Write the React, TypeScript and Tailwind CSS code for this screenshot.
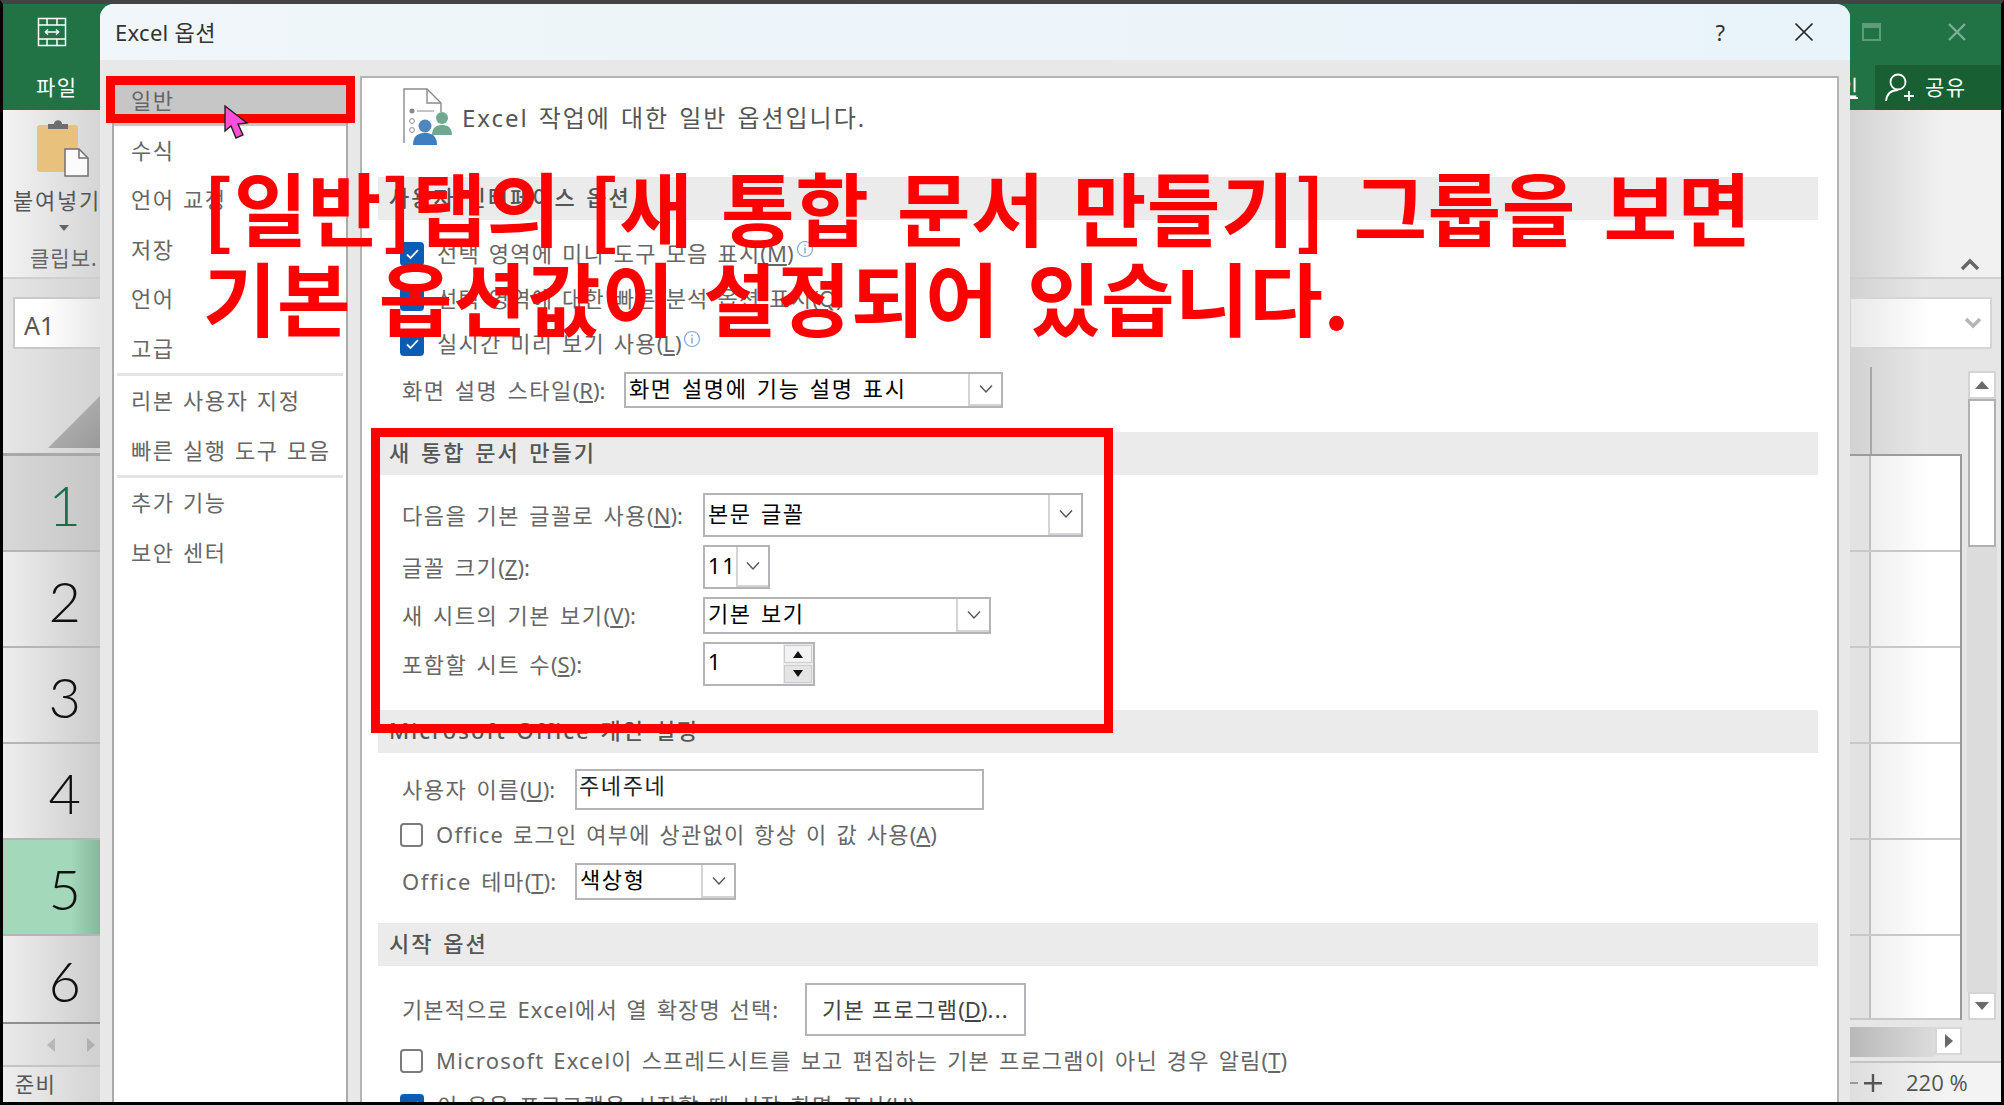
import React from "react";

const Chev = ({ className = "" }: { className?: string }) => (
  <svg width="16" height="10" viewBox="0 0 16 10" className={className} fill="none" stroke="#555" strokeWidth="1.4"><path d="M2 1.5 L8 8 L14 1.5" /></svg>
);

const U = ({ c }: { c: string }) => (<span className="tracking-normal">(<u>{c}</u>)</span>);

const Info = () => (
  <svg width="18" height="18" viewBox="0 0 18 18" className="ml-[2px] -mt-[10px]" fill="none"><circle cx="9" cy="9" r="7.5" stroke="#7ea6d8" strokeWidth="1.2" /><rect x="8.3" y="7.5" width="1.4" height="6" fill="#7ea6d8" /><rect x="8.3" y="4.5" width="1.4" height="1.6" fill="#7ea6d8" /></svg>
);

const Check = ({ on }: { on?: boolean }) => on ? (
  <span className="flex h-[24px] w-[24px] items-center justify-center rounded-[4px] bg-[#0b5cb5] shrink-0">
    <svg width="15" height="12" viewBox="0 0 15 12" fill="none" stroke="#fff" strokeWidth="1.8"><path d="M2 6.5 L5.5 10 L13 2" /></svg>
  </span>
) : (
  <span className="block h-[24px] w-[23px] rounded-[4px] border-2 border-[#7b7b7b] bg-white shrink-0" />
);

const Section = ({ title, mt }: { title: string; mt: string }) => (
  <div className={`ml-[16px] mr-[19px] flex h-[43px] items-center bg-[#ebebeb] pb-[2px] pl-[11px] text-[22px] font-medium tracking-[2px] [word-spacing:2px] text-[#555] ${mt}`}>{title}</div>
);

const Select = ({ w, h, text }: { w: string; h: string; text: string }) => (
  <div className={`flex shrink-0 items-stretch border-2 border-[#b4b4b8] bg-white ${w} ${h}`}>
    <span className="flex flex-1 items-center pl-[3px] pb-[4px] text-[22px] tracking-[1.6px] [word-spacing:2px] text-black whitespace-nowrap">{text}</span>
    <span className="flex w-[33px] items-center justify-center border-l-2 border-b-2 border-[#d4d4d4]"><Chev /></span>
  </div>
);

const CheckRow = ({ on, children, cls }: { on?: boolean; children: React.ReactNode; cls: string }) => (
  <div className={`ml-[38px] flex items-center gap-[13px] text-[22px] tracking-[1.2px] [word-spacing:2px] text-[#666] whitespace-nowrap ${cls}`}>
    <Check on={on} />
    <span className="flex items-center">{children}</span>
  </div>
);

const Label = ({ w, children }: { w: string; children: React.ReactNode }) => (
  <span className={`shrink-0 whitespace-nowrap text-[22px] tracking-[1.5px] [word-spacing:2px] text-[#666] ${w}`}>{children}</span>
);

const Nav = ({ children, sel }: { children: React.ReactNode; sel?: boolean }) => (
  <div className={`flex h-[49.5px] items-center pl-[17px] text-[22px] tracking-[1.6px] [word-spacing:1px] text-[#666] whitespace-nowrap ${sel ? "bg-[#c6c6c6]" : ""}`}>{children}</div>
);

const RowNum = ({ n, cls }: { n: number; cls: string }) => (
  <div className={`flex h-[96px] items-center justify-end border-b-2 border-[#b5b5b5] pr-[19px] pt-[4px] font-['Lato',sans-serif] text-[56px] font-light ${cls}`}>{n}</div>
);

const GridRow = ({ h = "h-[96px]" }: { h?: string }) => (
  <div className={`flex border-b-2 border-[#c8c8c8] ${h}`}>
    <div className="h-full w-[21px] border-r-2 border-[#c0c0c0] bg-[#e2e2e2]" />
    <div className="h-full flex-1 bg-[linear-gradient(90deg,#efefef,#ffffff_60px)]" />
  </div>
);

const Arrow = ({ d, fill = "#6a6a6a" }: { d: string; fill?: string }) => (
  <svg width="16" height="14" viewBox="0 0 16 14"><path d={d} fill={fill} /></svg>
);

const GREY = "bg-[linear-gradient(90deg,#f3f3f3_0,#d4d4d4_100px,#d4d4d4_1850px,#f1f1f1_1940px)]";

export default function App() {
  return (
    <div className="relative h-[1105px] w-[2004px] overflow-hidden border-x-[3px] border-t-[4px] border-b-[3px] border-x-black border-t-[#444] border-b-black bg-black font-['Noto_Sans','Noto_Sans_CJK_KR',sans-serif]">
      {/* Excel behind */}
      <div className="flex h-full flex-col">
        {/* green */}
        <div className="flex h-[106px] shrink-0 justify-between bg-[#217346]">
          <div className="flex w-[97px] flex-col text-white">
            <svg width="30" height="30" viewBox="0 0 30 30" className="ml-[34px] mt-[13px]" fill="none" stroke="#fff" strokeWidth="1.5">
              <rect x="1.5" y="1.5" width="27" height="27" />
              <path d="M1.5 8H28.5M1.5 22H28.5M10 1.5V8M20 1.5V8M10 22V28.5M20 22V28.5" />
              <path d="M8 15H22M8 15l3-2.5M8 15l3 2.5M22 15l-3-2.5M22 15l-3 2.5" strokeWidth="1.6" />
            </svg>
            <span className="ml-[33px] mt-[25px] text-[21px] tracking-[1.5px]">파일</span>
          </div>
          <div className="flex w-[151px] flex-col">
            <div className="flex h-[61px] items-start">
              <svg width="20" height="20" viewBox="0 0 20 20" className="ml-[12px] mt-[18px]" fill="none" stroke="#5f9c7b" strokeWidth="2"><rect x="1" y="2" width="17" height="16" /><path d="M1 4.5H18" strokeWidth="3" /></svg>
              <svg width="20" height="20" viewBox="0 0 20 20" className="ml-[65px] mt-[18px]" fill="none" stroke="#7fae95" strokeWidth="2.4"><path d="M2 2 L18 18 M18 2 L2 18" /></svg>
            </div>
            <div className="flex flex-1 items-stretch">
              <span className="flex w-[25px] items-center justify-end pr-[17px] text-[21px] text-white underline">인</span>
              <div className="flex flex-1 items-center bg-[#185f33] pl-[9px] text-white">
                <svg width="32" height="32" viewBox="0 0 32 32" fill="none" stroke="#fff" strokeWidth="1.8"><circle cx="14" cy="10" r="7.5" /><path d="M2 29c1-8 6-11 12-11M20 24h10M25 19v10" /></svg>
                <span className="ml-[9px] text-[21px] tracking-[1.5px]">공유</span>
              </div>
            </div>
          </div>
        </div>
        {/* ribbon */}
        <div className={`relative flex h-[169px] shrink-0 justify-between border-b-2 border-[#cfcfcf] ${GREY}`}>
          <div className="flex w-[97px] flex-col overflow-hidden">
            <svg width="56" height="58" viewBox="0 0 56 58" className="ml-[31px] mt-[9px]">
              <rect x="3" y="6" width="41" height="47" rx="3" fill="#e8c27c" />
              <path d="M14 10V5h6c0-5 8-5 8 0h6v5z" fill="#6e6e6e" />
              <path d="M31 30h14l9 9v18H31z" fill="#fbfbfb" stroke="#707070" strokeWidth="1.5" />
              <path d="M45 30v9h9" fill="none" stroke="#707070" strokeWidth="1.5" />
            </svg>
            <span className="ml-[10px] mt-[7px] text-[22px] tracking-[1.8px] text-[#555] whitespace-nowrap">붙여넣기</span>
            <svg width="12" height="7" viewBox="0 0 12 7" className="ml-[55px] mt-[8px]"><path d="M1 0H11L6 6z" fill="#666" /></svg>
            <span className="ml-[27px] mt-[11px] text-[21px] tracking-[1px] text-[#666] whitespace-nowrap">클립보.</span>
          </div>
          <svg width="20" height="14" viewBox="0 0 20 14" className="mt-[148px] mr-[21px]" fill="none" stroke="#666" strokeWidth="3.4"><path d="M2 11 L10 3 L18 11" /></svg>
        </div>
        {/* formula */}
        <div className="flex h-[70px] shrink-0 justify-between bg-[linear-gradient(90deg,#e6e6e6_0,#d2d2d2_100px,#d2d2d2_1850px,#e6e6e6_1920px)] pt-[18px]">
          <div className="flex h-[52px] w-[87px] ml-[10px] items-center border-2 border-r-0 border-[#c9c9c9] bg-[linear-gradient(90deg,#fff_30%,#e8e8e8)] pl-[9px] pt-[6px] text-[25px] text-[#555]">A1</div>
          <div className="flex h-[52px] w-[141px] mr-[9px] items-center justify-end border-2 border-l-0 border-[#d5d5d5] bg-[linear-gradient(90deg,#e8e8e8,#ffffff_80px)] pr-[8px]">
            <svg width="18" height="12" viewBox="0 0 18 12" fill="none" stroke="#b5b5b5" strokeWidth="3.4"><path d="M2 2 L9 9 L16 2" /></svg>
          </div>
        </div>
        {/* grid */}
        <div className="flex min-h-0 flex-1 justify-between bg-[linear-gradient(90deg,#e6e6e6_0,#d2d2d2_100px,#d2d2d2_1850px,#e6e6e6_1920px)]">
          <div className="flex w-[97px] flex-col">
            <div className="flex h-[107px] items-end border-b-[3px] border-[#a8a8a8] pb-[5px]">
              <div className="ml-[45px] h-[52px] w-[52px] bg-[linear-gradient(135deg,#bbb,#999)] [clip-path:polygon(100%_0,100%_100%,0_100%)]" />
            </div>
            <RowNum n={1} cls="bg-[linear-gradient(90deg,#d8d8d8,#c6c6c6)] text-[#13704a]" />
            <RowNum n={2} cls="bg-[linear-gradient(90deg,#eeeeee,#cccccc)] text-[#111]" />
            <RowNum n={3} cls="bg-[linear-gradient(90deg,#eeeeee,#cccccc)] text-[#111]" />
            <RowNum n={4} cls="bg-[linear-gradient(90deg,#eeeeee,#cccccc)] text-[#111]" />
            <RowNum n={5} cls="bg-[linear-gradient(90deg,#a3d8ba_70%,#86b79c)] text-[#111]" />
            <div className="flex h-[88px] items-center justify-end border-b-2 border-[#8f8f8f] bg-[linear-gradient(90deg,#eeeeee,#cccccc)] pr-[19px] pt-[4px] font-['Lato',sans-serif] text-[56px] font-light text-[#111]">6</div>
            <div className="flex h-[43px] items-center justify-end gap-[24px] border-b-2 border-[#c4c4c4] bg-[linear-gradient(90deg,#e9e9e9,#d0d0d0)] pr-[1px]">
              <Arrow d="M12 0V14L4 7z" fill="#b8b8b8" />
              <Arrow d="M4 0V14L12 7z" fill="#b0b0b0" />
            </div>
            <div className="flex min-h-0 flex-1 items-center bg-[linear-gradient(90deg,#eeeeee,#d4d4d4)] pl-[12px] text-[21px] tracking-[1.2px] text-[#555]">준비</div>
          </div>
          <div className="flex w-[151px] flex-col">
            <div className="flex h-[671px] shrink-0">
              <div className="flex w-[112px] flex-col">
                <div className="flex h-[107px] shrink-0 border-b-2 border-[#9c9c9c] pt-[18px]">
                  <div className="ml-[20px] h-full w-[2px] bg-[#a8a8a8]" />
                </div>
                <div className="flex-1 border-r-2 border-b-2 border-[#999]">
                  <GridRow /><GridRow /><GridRow /><GridRow /><GridRow />
                  <GridRow h="h-[84px]" />
                </div>
              </div>
              <div className="flex w-[39px] flex-col pl-[6px] pr-[5px]">
                <div className="mt-[22px] flex h-[28px] shrink-0 items-center justify-center border-2 border-[#d4d4d4] bg-white"><Arrow d="M1 11H15L8 3z" /></div>
                <div className="h-[148px] shrink-0 border-2 border-[#b0b0b0] bg-white" />
                <div className="-mx-[1px] flex-1 bg-[#dcdcdc]" />
                <div className="flex h-[28px] shrink-0 items-center justify-center border-2 border-[#d4d4d4] bg-white"><Arrow d="M1 3H15L8 11z" /></div>
              </div>
            </div>
            <div className="flex h-[43px] shrink-0 border-b-2 border-[#c4c4c4] bg-[#e6e6e6] pr-[39px] pt-[7px]">
              <div className="h-[30px] flex-1 bg-[linear-gradient(90deg,#b8b8b8,#dcdcdc)]" />
              <div className="flex h-[28px] w-[27px] items-center justify-center border-2 border-[#d8d8d8] bg-white"><Arrow d="M4 0V14L12 7z" /></div>
            </div>
            <div className="flex min-h-0 flex-1 items-center bg-[linear-gradient(90deg,#dedede,#f3f3f3_90px)] text-[#555]">
              <span className="h-[2px] w-[8px] bg-[#999]" />
              <svg width="18" height="18" viewBox="0 0 18 18" className="ml-[6px]"><path d="M0 8h18v2.4H0zM7.8 0h2.4v18H7.8z" fill="#555" /></svg>
              <span className="ml-[24px] font-['Open_Sans',sans-serif] text-[22px]">220 %</span>
            </div>
          </div>
        </div>
      </div>

      {/* dialog */}
      <div className="absolute left-[97px] top-0 flex h-[1099px] w-[1750px] flex-col overflow-hidden rounded-t-[14px] bg-[#e8e8e8]">
        <div className="flex h-[56px] shrink-0 items-center justify-between bg-[linear-gradient(90deg,#f0f6f9,#e9f3fa)] pl-[15px] text-[#333]">
          <span className="text-[22px] tracking-[0.3px]">Excel 옵션</span>
          <div className="flex items-center">
            <span className="text-[22px] text-[#333]">?</span>
            <svg width="20" height="20" viewBox="0 0 20 20" className="ml-[69px] mr-[36px]" fill="none" stroke="#222" strokeWidth="1.7"><path d="M1.5 1.5 L18.5 18.5 M18.5 1.5 L1.5 18.5" /></svg>
          </div>
        </div>
        <div className="flex min-h-0 flex-1 pt-[16px]">
          {/* nav */}
          <div className="ml-[12px] w-[236px] shrink-0 border-x-2 border-[#aaa] bg-white">
            <div className="h-[48px]"><Nav sel>일반</Nav></div>
            <div className="h-[1.5px]" />
            <Nav>수식</Nav>
            <Nav>언어 교정</Nav>
            <Nav>저장</Nav>
            <Nav>언어</Nav>
            <Nav>고급</Nav>
            <div className="mx-[3px] h-[3px] bg-[#e2e4ea]" />
            <Nav>리본 사용자 지정</Nav>
            <Nav>빠른 실행 도구 모음</Nav>
            <div className="mx-[3px] h-[3px] bg-[#e2e4ea]" />
            <Nav>추가 기능</Nav>
            <Nav>보안 센터</Nav>
          </div>
          {/* right */}
          <div className="ml-[12px] mr-[11px] min-w-0 flex-1 border-x-2 border-t-2 border-[#b4b4b4] bg-white pt-[10px]">
            <div className="ml-[41px] flex h-[57px] items-center">
              <svg width="50" height="57" viewBox="0 0 50 57" fill="none">
                <path d="M1 55V1H24L38 15V24" stroke="#8a8a8a" strokeWidth="1.4" />
                <path d="M24 1V15H38" stroke="#8a8a8a" strokeWidth="1.4" />
                <circle cx="9" cy="23" r="2.5" fill="#8a8a8a" /><path d="M14 23H31" stroke="#8a8a8a" />
                <circle cx="9" cy="33" r="2.4" stroke="#8a8a8a" /><circle cx="9" cy="42" r="2.4" stroke="#8a8a8a" />
                <circle cx="39" cy="30" r="6" fill="#6fa98f" /><path d="M29 47c0-8 5-10 10-10s10 2 10 10z" fill="#6fa98f" />
                <circle cx="22" cy="38" r="6.5" fill="#4f86c0" /><path d="M10 57c0-10 6-12 12-12s12 2 12 12z" fill="#3f7fc0" />
              </svg>
              <span className="ml-[9px] mt-[2px] text-[24px] tracking-[1.95px] [word-spacing:2px] text-[#555] whitespace-nowrap">Excel 작업에 대한 일반 옵션입니다.</span>
            </div>
            <Section title="사용자 인터페이스 옵션" mt="mt-[32px]" />
            <div className="h-[11px]" />
            <CheckRow on cls="h-[45px]"><span>선택 영역에 미니 도구 모음 표시</span><U c="M" /><Info /></CheckRow>
            <CheckRow on cls="h-[45px]"><span>선택 영역에 대한 빠른 분석 옵션 표시</span><U c="Q" /></CheckRow>
            <CheckRow on cls="h-[45px]"><span>실시간 미리 보기 사용</span><U c="L" /><Info /></CheckRow>
            <div className="mt-[6px] ml-[40px] flex h-[36px] items-center">
              <Label w="w-[222px]">화면 설명 스타일<U c="R" />:</Label>
              <Select w="w-[379px]" h="h-[36px]" text="화면 설명에 기능 설명 표시" />
            </div>

            <Section title="새 통합 문서 만들기" mt="mt-[24px]" />
            <div className="mt-[18px] ml-[40px] flex h-[44px] items-center">
              <Label w="w-[301px]">다음을 기본 글꼴로 사용<U c="N" />:</Label>
              <Select w="w-[380px]" h="h-[44px]" text="본문 글꼴" />
            </div>
            <div className="mt-[8px] ml-[40px] flex h-[44px] items-center">
              <Label w="w-[301px]">글꼴 크기<U c="Z" />:</Label>
              <Select w="w-[67px]" h="h-[44px]" text="11" />
            </div>
            <div className="mt-[8px] ml-[40px] flex h-[37px] items-center">
              <Label w="w-[301px]">새 시트의 기본 보기<U c="V" />:</Label>
              <Select w="w-[288px]" h="h-[37px]" text="기본 보기" />
            </div>
            <div className="mt-[8px] ml-[40px] flex h-[44px] items-center">
              <Label w="w-[301px]">포함할 시트 수<U c="S" />:</Label>
              <div className="flex h-[44px] w-[112px] items-stretch border-2 border-[#b4b4b8] bg-white">
                <span className="flex flex-1 items-center pl-[3px] pb-[6px] text-[22px] text-black">1</span>
                <div className="flex w-[30px] flex-col gap-[2px] bg-[#ececec] p-[1px]">
                  <span className="flex flex-1 items-center justify-center border border-[#ccc] bg-[#f2f2f2]"><Arrow d="M3 11H13L8 4z" fill="#111" /></span>
                  <span className="flex flex-1 items-center justify-center border border-[#ccc] bg-[#e4e4e4]"><Arrow d="M3 3H13L8 10z" fill="#111" /></span>
                </div>
              </div>
            </div>

            <Section title="Microsoft Office 개인 설정" mt="mt-[24px]" />
            <div className="mt-[16px] ml-[40px] flex h-[41px] items-center">
              <Label w="w-[173px]">사용자 이름<U c="U" />:</Label>
              <div className="flex h-[41px] w-[409px] items-center border-2 border-[#b4b4b8] bg-white pb-[8px] pl-[2px] text-[22px] tracking-[1.6px] text-[#222]">주네주네</div>
            </div>
            <CheckRow cls="mt-[13px] h-[23px]"><span>Office 로그인 여부에 상관없이 항상 이 값 사용</span><U c="A" /></CheckRow>
            <div className="mt-[17px] ml-[40px] flex h-[37px] items-center">
              <Label w="w-[173px]">Office 테마<U c="T" />:</Label>
              <Select w="w-[161px]" h="h-[37px]" text="색상형" />
            </div>

            <Section title="시작 옵션" mt="mt-[23px]" />
            <div className="mt-[17px] ml-[40px] flex h-[53px] items-center">
              <span className="w-[403px] shrink-0 whitespace-nowrap text-[22px] tracking-[1.1px] [word-spacing:2px] text-[#666]">기본적으로 Excel에서 열 확장명 선택:</span>
              <div className="flex h-[53px] w-[221px] items-center justify-center border-2 border-[#b4b4b8] bg-white text-[22px] tracking-[1.3px] text-[#444] whitespace-nowrap">기본 프로그램<U c="D" />...</div>
            </div>
            <CheckRow cls="mt-[13px] h-[23px]"><span>Microsoft Excel이 스프레드시트를 보고 편집하는 기본 프로그램이 아닌 경우 알림</span><U c="T" /></CheckRow>
            <CheckRow on cls="mt-[22px] h-[23px]"><span>이 응용 프로그램을 시작할 때 시작 화면 표시</span><U c="H" /></CheckRow>
          </div>
        </div>
      </div>

      {/* annotation overlays */}
      <div className="absolute left-[103px] top-[72px] h-[47px] w-[249px] border-[9px] border-[#ff0000]" />
      <div className="absolute left-[368px] top-[424px] h-[305px] w-[742px] border-[9px] border-[#ff0000]" />
      <svg width="28" height="36" viewBox="0 0 28 36" className="absolute left-[220px] top-[101px]">
        <path d="M2 1 L2 26 L8 21 L13 33 L20 30 L15 19 L24 18 Z" fill="#ff4fd8" stroke="#222" strokeWidth="1.4" />
      </svg>
      <div className="absolute left-[200px] top-[156px] font-['Noto_Sans_CJK_KR',sans-serif] text-[80px] font-bold leading-[90px] tracking-[0.5px] [word-spacing:9px] text-[#ff0000] whitespace-nowrap">
        <div>[일반]탭의 [새 통합 문서 만들기] 그룹을 보면</div>
        <div>기본 옵션값이 설정되어 있습니다.</div>
      </div>
    </div>
  );
}
